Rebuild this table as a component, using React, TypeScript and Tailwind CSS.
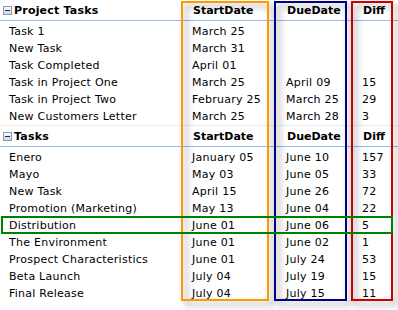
import React from 'react';

interface Row {
  title: string;
  start: string;
  due?: string;
  diff?: string;
}

const projectTasks: Row[] = [
  { title: 'Task 1', start: 'March 25' },
  { title: 'New Task', start: 'March 31' },
  { title: 'Task Completed', start: 'April 01' },
  { title: 'Task in Project One', start: 'March 25', due: 'April 09', diff: '15' },
  { title: 'Task in Project Two', start: 'February 25', due: 'March 25', diff: '29' },
  { title: 'New Customers Letter', start: 'March 25', due: 'March 28', diff: '3' },
];

const tasks: Row[] = [
  { title: 'Enero', start: 'January 05', due: 'June 10', diff: '157' },
  { title: 'Mayo', start: 'May 03', due: 'June 05', diff: '33' },
  { title: 'New Task', start: 'April 15', due: 'June 26', diff: '72' },
  { title: 'Promotion (Marketing)', start: 'May 13', due: 'June 04', diff: '22' },
  { title: 'Distribution', start: 'June 01', due: 'June 06', diff: '5' },
  { title: 'The Environment', start: 'June 01', due: 'June 02', diff: '1' },
  { title: 'Prospect Characteristics', start: 'June 01', due: 'July 24', diff: '53' },
  { title: 'Beta Launch', start: 'July 04', due: 'July 19', diff: '15' },
  { title: 'Final Release', start: 'July 04', due: 'July 15', diff: '11' },
];

const cols = 'grid grid-cols-[186px_94px_76px_42px]';

// collapse toggle, the little boxed minus
const Collapse = () => (
  <span className="w-[9px] h-[9px] ml-[3px] mr-[1px] border border-[#8a9bb0] bg-gradient-to-b from-[#ffffff] to-[#c9d6e6] flex items-center justify-center shrink-0">
    <span className="w-[5px] h-px bg-[#1a2a4a]" />
  </span>
);

const GroupHeader = ({ title }: { title: string }) => (
  <div className={`${cols} h-[21px] border-b border-[#95bdf0] font-bold items-center`}>
    <div className="flex items-center">
      <Collapse />
      <span className="ml-[1px] tracking-[0.2px]">{title}</span>
    </div>
    <div className="pl-[7px]">StartDate</div>
    <div className="pl-[7px]">DueDate</div>
    <div className="pl-[7px]">Diff</div>
  </div>
);

const DataRow = ({ row }: { row: Row }) => (
  <div className={`${cols} h-[17px] pt-[3px] items-center tracking-[0.25px]`}>
    <div className="pl-[9px] whitespace-nowrap">{row.title}</div>
    <div className="pl-[6px] whitespace-nowrap">{row.start}</div>
    <div className="pl-[6px] whitespace-nowrap">{row.due}</div>
    <div className="pl-[6px]">{row.diff}</div>
  </div>
);

export default function App() {
  return (
    <div
      className="relative w-[398px] h-[310px] bg-white text-black text-[11px] leading-[13px] overflow-hidden"
      style={{ fontFamily: '"DejaVu Sans", Verdana, sans-serif' }}
    >
      <GroupHeader title="Project Tasks" />
      <div className="pb-[2px] border-b border-[#ececec]">
        {projectTasks.map((r) => (
          <DataRow key={r.title} row={r} />
        ))}
      </div>
      <GroupHeader title="Tasks" />
      {tasks.map((r) => (
        <DataRow key={r.title} row={r} />
      ))}

      {/* column highlight frames */}
      <div className="absolute left-[181px] top-[1px] w-[88px] h-[300px] border-2 border-[#ff9900] drop-shadow-[4px_4px_3px_rgba(0,0,0,0.4)]" />
      <div className="absolute left-[274px] top-[1px] w-[73px] h-[300px] border-2 border-[#000080] drop-shadow-[4px_4px_3px_rgba(0,0,0,0.4)]" />
      <div className="absolute left-[351px] top-[1px] w-[42px] h-[300px] border-2 border-[#cc0000] drop-shadow-[4px_4px_3px_rgba(0,0,0,0.4)]" />
      {/* row highlight */}
      <div className="absolute left-[1px] top-[216px] w-[392px] h-[18px] border-2 border-[#008000]" />
    </div>
  );
}
